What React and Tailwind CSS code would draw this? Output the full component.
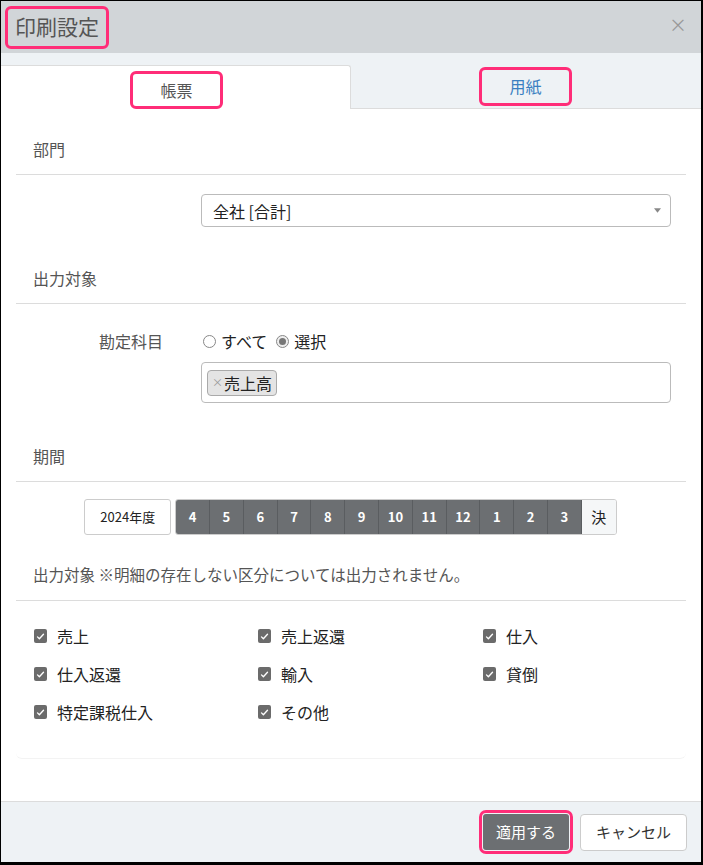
import React from 'react';

const font = { fontFamily: '"Noto Sans CJK JP", "Noto Sans", sans-serif' };

const months = ['4', '5', '6', '7', '8', '9', '10', '11', '12', '1', '2', '3'];

const targets = ['売上', '売上返還', '仕入', '仕入返還', '輸入', '貸倒', '特定課税仕入', 'その他'];

const SectionHeader = ({ children, size = 'text-[16px]' }) => (
  <div className={`h-[52px] flex items-center pl-[17px] border-b border-[#dcdcdc] text-[#555] ${size}`}>
    {children}
  </div>
);

const CheckItem = ({ label }) => (
  <div className="flex items-center h-[24px]">
    <span className="w-[13px] h-[14px] rounded-[2px] bg-[#6b6b6b] flex items-center justify-center mr-[10px]">
      <svg viewBox="0 0 12 12" className="w-[9px] h-[9px]">
        <path d="M2 6.5l2.5 2.5L10 3" fill="none" stroke="#fff" strokeWidth="1.8" strokeLinecap="round" strokeLinejoin="round" />
      </svg>
    </span>
    <span className="text-[16px] text-[#222]">{label}</span>
  </div>
);

const App = () => {
  return (
    <div style={font} className="w-[703px] h-[865px] bg-white border-l border-t border-r-2 border-b-[3px] border-black flex flex-col overflow-hidden">
      {/* header */}
      <div className="h-[52px] shrink-0 bg-[#d1d5d8] flex items-center justify-between pl-[4px] pr-[14px]">
        <div className="border-[3px] border-[#ff2d78] rounded-[6px] px-[7px] h-[43px] flex items-center">
          <span className="text-[21px] text-[#555]">印刷設定</span>
        </div>
        <span className="text-[#999] text-[18px] leading-none mb-[6px]">×</span>
      </div>

      {/* tabs */}
      <div className="h-[56px] shrink-0 bg-[#eef2f5] flex items-end border-b border-[#dcdcdc]">
        <div className="w-[350px] h-[44px] bg-white border-t border-r border-[#dcdcdc] rounded-tr-[3px] -mb-px flex items-center justify-center">
          <div className="w-[93px] h-[38px] mt-[4px] ml-[2px] border-[3px] border-[#ff2d78] rounded-[6px] flex items-center justify-center text-[16px] text-[#555]">
            帳票
          </div>
        </div>
        <div className="flex-1 h-[44px] flex items-center justify-center">
          <div className="w-[93px] h-[39px] border-[3px] border-[#ff2d78] rounded-[6px] flex items-center justify-center text-[16px] text-[#3a7fc1] mr-[1px]">
            用紙
          </div>
        </div>
      </div>

      {/* content */}
      <div className="flex-1 pt-[14px]">
        <div className="mx-[15px] border-b border-[#f3f3f3] rounded-b-[6px] pb-[34px]">
          <SectionHeader>部門</SectionHeader>
          <div className="pl-[185px] pr-[15px] mt-[19px]">
            <div className="h-[33px] border border-[#bbb] rounded-[4px] flex items-center justify-between pl-[11px] pr-[9px]">
              <span className="text-[16px] text-[#222]">全社 [合計]</span>
              <svg viewBox="0 0 8 5" className="w-[7px] h-[5px]">
                <path d="M0 0h8L4 5z" fill="#888" />
              </svg>
            </div>
          </div>

          <div className="mt-[25px]">
            <SectionHeader>出力対象</SectionHeader>
          </div>
          <div className="flex mt-[25px] h-[24px] items-center">
            <div className="w-[186px] pl-[83px] text-[16px] text-[#555]">勘定科目</div>
            <div className="flex items-center text-[16px] text-[#222]">
              <span className="w-[13px] h-[13px] rounded-full border border-[#888] bg-white mr-[5px] ml-[1px]" />
              <span className="mr-[9px]">すべて</span>
              <span className="w-[13px] h-[13px] rounded-full border border-[#888] bg-[#eee] mr-[5px] flex items-center justify-center">
                <span className="w-[7px] h-[7px] rounded-full bg-[#777]" />
              </span>
              <span>選択</span>
            </div>
          </div>
          <div className="pl-[185px] pr-[15px] mt-[9px]">
            <div className="h-[41px] border border-[#bbb] rounded-[4px] flex items-center pl-[5px]">
              <div className="h-[26px] bg-[#e4e4e4] border border-[#aaa] rounded-[4px] flex items-center px-[4px]">
                <span className="text-[#999] text-[11px] mr-[1px]">×</span>
                <span className="text-[16px] text-[#222]">売上高</span>
              </div>
            </div>
          </div>

          <div className="mt-[27px]">
            <SectionHeader>期間</SectionHeader>
          </div>
          <div className="flex justify-center mt-[17px] pr-[1px]">
            <div className="flex h-[36px]">
              <div className="w-[87px] border border-[#ccc] rounded-[3px] bg-white flex items-center justify-center text-[13px] text-[#222] mr-[4px]">
                2024年度
              </div>
              <div className="flex rounded-[3px] overflow-hidden border border-[#ccc]">
                {months.map((m, i) => (
                  <div
                    key={m + i}
                    className="w-[33.8px] bg-[#6c6f72] border-r border-[#5a5d60] flex items-center justify-center text-[13px] font-bold text-white"
                  >
                    {m}
                  </div>
                ))}
                <div className="w-[34px] bg-[#f5f7f8] flex items-center justify-center text-[15px] text-[#222]">決</div>
              </div>
            </div>
          </div>

          <div className="mt-[14px]">
            <SectionHeader size="text-[15.5px]">出力対象 ※明細の存在しない区分については出力されません。</SectionHeader>
          </div>
          <div className="grid grid-cols-[224px_225px_1fr] gap-y-[14px] pl-[18px] mt-[23px]">
            {targets.map((t) => (
              <CheckItem key={t} label={t} />
            ))}
          </div>
        </div>
      </div>

      {/* footer */}
      <div className="h-[61px] shrink-0 bg-[#eef2f5] border-t border-[#dcdcdc] flex items-center justify-end pr-[14px]">
        <div className="border-[3px] border-[#ff2d78] rounded-[7px] p-[1px] mr-[7px]">
          <button className="w-[86px] h-[36px] bg-[#6c6f72] rounded-[3px] text-white text-[15px]" style={font}>
            適用する
          </button>
        </div>
        <button className="w-[107px] h-[37px] bg-white border border-[#ccc] rounded-[4px] text-[#333] text-[15px]" style={font}>
          キャンセル
        </button>
      </div>
    </div>
  );
};

export default App;
